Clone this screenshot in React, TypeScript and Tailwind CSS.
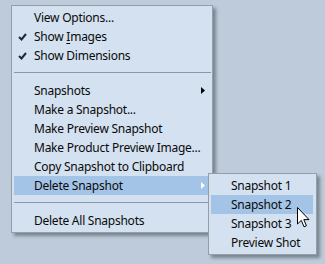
import type { ReactNode } from "react";

type Item = { label: ReactNode; checked?: boolean; sub?: boolean; active?: boolean };

function Check() {
  return (
    <svg width="9" height="8" viewBox="0 0 9 8">
      <path d="M1 4 L3.5 6.5 L8 1" fill="none" stroke="#1b2a3c" strokeWidth="2" />
    </svg>
  );
}

function Arrow({ white }: { white?: boolean }) {
  return (
    <svg width="4" height="7" viewBox="0 0 4 7">
      <path d="M0 0 L4 3.5 L0 7 Z" fill={white ? "#ffffff" : "#000000"} />
    </svg>
  );
}

function Row({ item }: { item: Item }) {
  return (
    <div className={`flex h-[19px] items-center whitespace-nowrap ${item.active ? "bg-[#a3c3e7]" : ""}`}>
      <div className="flex w-5 shrink-0 justify-start pl-[4px]">{item.checked && <Check />}</div>
      <div className="flex-1 leading-[19px]">{item.label}</div>
      {item.sub && (
        <div className="flex w-[10px] shrink-0">
          <Arrow white={item.active} />
        </div>
      )}
    </div>
  );
}

function Sep() {
  return <div className="mt-[7px] mb-[8px] h-px bg-[#8796a8]" />;
}

function Cursor() {
  return (
    <svg width="13" height="22" viewBox="0 0 13 22" className="absolute left-[297px] top-[207px]">
      <path
        d="M0.5 0.5 L0.5 17 L4.3 13.4 L7 19.8 L9.4 18.8 L6.8 12.6 L12 12.6 Z"
        fill="#ffffff"
        stroke="#000000"
        strokeWidth="1"
      />
    </svg>
  );
}

const top: Item[] = [
  { label: "View Options..." },
  {
    label: (
      <>
        Show <span className="underline underline-offset-2">I</span>mages
      </>
    ),
    checked: true,
  },
  { label: "Show Dimensions", checked: true },
];

const mid: Item[] = [
  { label: "Snapshots", sub: true },
  { label: "Make a Snapshot..." },
  { label: "Make Preview Snapshot" },
  { label: "Make Product Preview Image..." },
  { label: "Copy Snapshot to Clipboard" },
  { label: "Delete Snapshot", sub: true, active: true },
];

const subItems: Item[] = [
  { label: "Snapshot 1" },
  { label: "Snapshot 2", active: true },
  { label: "Snapshot 3" },
  { label: "Preview Shot" },
];

export default function App() {
  return (
    <div
      className="relative flex h-[264px] w-[325px] items-start overflow-hidden bg-[#bdcbda] pt-[5px] pl-[11px] text-[12px] tracking-[-0.25px] text-[#0a0a0a]"
      style={{ fontFamily: '"Noto Sans", "Open Sans", sans-serif' }}
    >
      <div className="flex w-[202px] flex-col border border-[#979da4] bg-[#d3e1f0] py-[2px] pl-[2px] pr-[1px] shadow-[3px_3px_3px_rgba(40,50,60,0.45)]">
        {top.map((it, i) => (
          <Row key={i} item={it} />
        ))}
        <Sep />
        {mid.map((it, i) => (
          <Row key={i} item={it} />
        ))}
        <Sep />
        <Row item={{ label: "Delete All Snapshots" }} />
      </div>

      <div className="absolute left-[208px] top-[173px] flex w-[109px] flex-col border border-[#979da4] bg-[#d3e1f0] py-[2px] pl-[2px] pr-[3px] shadow-[3px_3px_3px_rgba(40,50,60,0.45)]">
        {subItems.map((it, i) => (
          <Row key={i} item={it} />
        ))}
      </div>

      <Cursor />
    </div>
  );
}
